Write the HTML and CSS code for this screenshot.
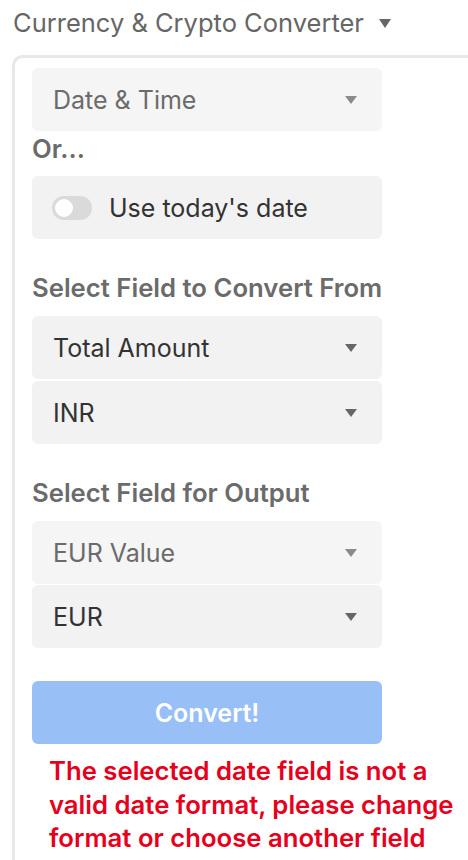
FILE: index.html
```html
<!DOCTYPE html>
<html>
<head>
<meta charset="utf-8">
<link rel="stylesheet" href="styles.css">
</head>
<body>
<div class="header">
  <span class="title">Currency &amp; Crypto Converter</span>
  <svg class="title-caret" width="12" height="9" viewBox="0 0 12 9"><path d="M0 0H12L6 9Z" fill="#666"/></svg>
</div>
<div class="card">
  <div class="select disabled">
    <span>Date &amp; Time</span>
    <svg class="caret" width="12" height="8" viewBox="0 0 12 8"><path d="M0 0H12L6 8Z"/></svg>
  </div>
  <div class="label or">Or...</div>
  <div class="switch-box">
    <span class="switch"><span class="knob"></span></span>
    <span>Use today's date</span>
  </div>
  <div class="label section">Select Field to Convert From</div>
  <div class="group">
    <div class="select">
      <span>Total Amount</span>
      <svg class="caret" width="12" height="8" viewBox="0 0 12 8"><path d="M0 0H12L6 8Z"/></svg>
    </div>
    <div class="select">
      <span>INR</span>
      <svg class="caret" width="12" height="8" viewBox="0 0 12 8"><path d="M0 0H12L6 8Z"/></svg>
    </div>
  </div>
  <div class="label section">Select Field for Output</div>
  <div class="group tight">
    <div class="select disabled">
      <span>EUR Value</span>
      <svg class="caret" width="12" height="8" viewBox="0 0 12 8"><path d="M0 0H12L6 8Z"/></svg>
    </div>
    <div class="select">
      <span>EUR</span>
      <svg class="caret" width="12" height="8" viewBox="0 0 12 8"><path d="M0 0H12L6 8Z"/></svg>
    </div>
  </div>
  <button class="convert">Convert!</button>
  <div class="error">The selected date field is not a valid date format, please change format or choose another field</div>
</div>
</body>
</html>
```
FILE: styles.css
```css
html, body {
  margin: 0;
  padding: 0;
  overflow: hidden;
  background: #fff;
}
body {
  font-family: Inter, "Liberation Sans", sans-serif;
  font-size: 25px;
  color: #333;
  width: 468px;
  height: 860px;
}
.header {
  display: flex;
  align-items: center;
  gap: 15px;
  height: 45px;
  padding: 0 0 0 13px;
}
.title {
  color: #666;
  font-size: 25.5px;
  line-height: 30px;
}
.title-caret {
  margin-top: 1px;
}
.card {
  margin-top: 10px;
  margin-left: 12px;
  width: 520px;
  border-top: 3px solid #e8e8e8;
  border-left: 3px solid #e8e8e8;
  border-top-left-radius: 11px;
  padding: 10px 0 0 17px;
  height: 900px;
  box-sizing: border-box;
}
.select {
  width: 350px;
  height: 63px;
  box-sizing: border-box;
  border-radius: 6px;
  background: #f2f2f2;
  display: flex;
  align-items: center;
  justify-content: space-between;
  padding: 0 25px 0 21px;
  color: #333;
  line-height: 30px;
}
.select .caret path { fill: #666; }
.select.disabled {
  background: #f5f5f5;
  color: #6b6b6b;
}
.select.disabled .caret path { fill: #8a8a8a; }
.label {
  font-weight: 600;
  color: #6b6b6b;
  line-height: 30px;
  font-size: 25.7px;
}
.label.or {
  margin: 3px 0 12px;
}
.label.section {
  margin: 34px 0 13px;
}
.switch-box {
  width: 350px;
  height: 63px;
  box-sizing: border-box;
  border-radius: 6px;
  background: #f2f2f2;
  display: flex;
  align-items: center;
  gap: 17px;
  padding-left: 20px;
  color: #333;
  line-height: 30px;
}
.switch {
  width: 40px;
  height: 24px;
  border-radius: 12px;
  background: #dadada;
  display: flex;
  align-items: center;
  padding-left: 3px;
  box-sizing: border-box;
}
.knob {
  width: 18px;
  height: 18px;
  border-radius: 50%;
  background: #fff;
}
.group {
  display: flex;
  flex-direction: column;
  gap: 2px;
}
.group.tight {
  gap: 1px;
}
.convert {
  display: block;
  margin-top: 33px;
  width: 350px;
  height: 63px;
  border: none;
  border-radius: 6px;
  background: #99bff7;
  color: #fff;
  font-family: inherit;
  font-size: 25px;
  font-weight: 600;
}
.error {
  width: 412px;
  margin: 10px 0 0 17px;
  color: #e6001c;
  font-weight: 600;
  font-size: 25.7px;
  line-height: 33.5px;
}
```
